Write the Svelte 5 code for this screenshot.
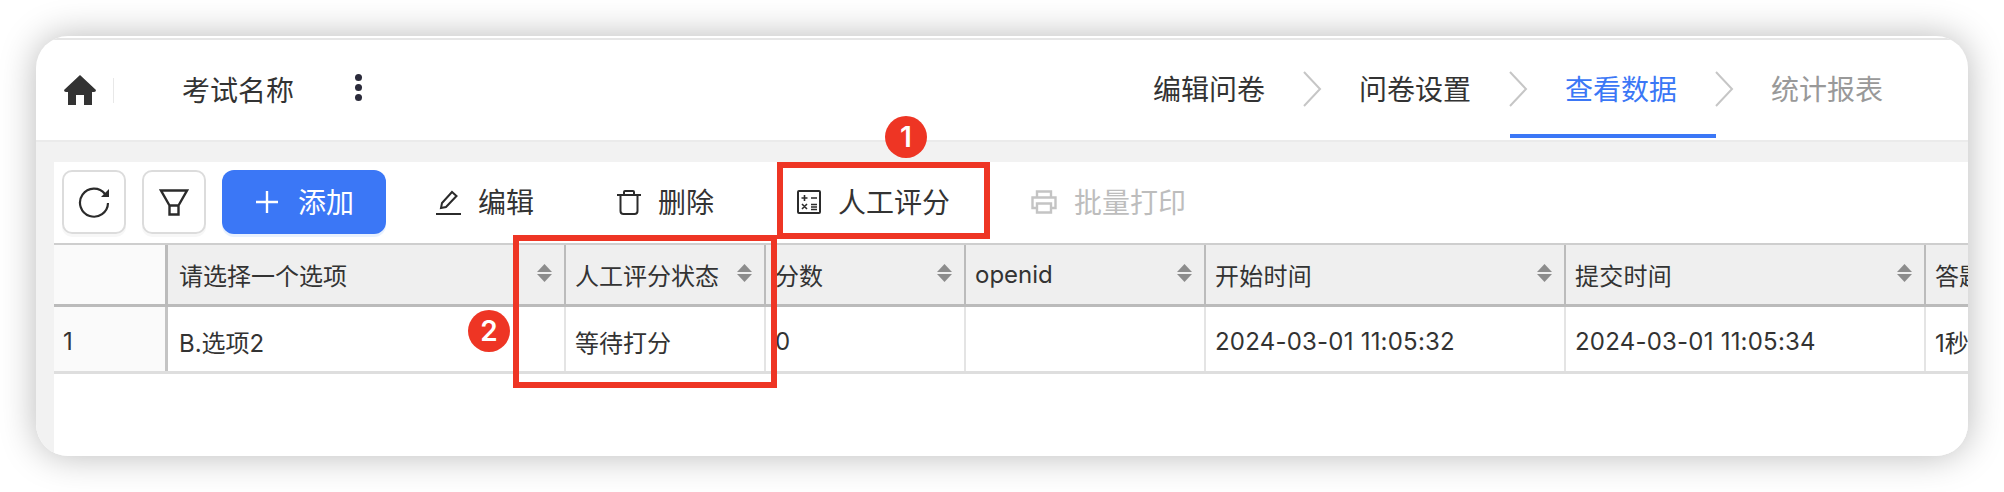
<script>
    const steps = [
        { label: "编辑问卷", state: "" },
        { label: "问卷设置", state: "" },
        { label: "查看数据", state: "active" },
        { label: "统计报表", state: "todo" }
    ];

    //last column runs off the right edge of the window, same as the real table
    const columns = [
        { title: "", width: 114, sort: false, cls: "index" },
        { title: "请选择一个选项", width: 398, sort: true, cls: "option" },
        { title: "人工评分状态", width: 200, sort: true },
        { title: "分数", width: 200, sort: true },
        { title: "openid", width: 240, sort: true },
        { title: "开始时间", width: 360, sort: true, cls: "time" },
        { title: "提交时间", width: 360, sort: true, cls: "time" },
        { title: "答题时长", width: 160, sort: false }
    ];
    const row = ["1", "B.选项2", "等待打分", "0", "", "2024-03-01 11:05:32", "2024-03-01 11:05:34", "1秒"];
    const template = columns.map((c) => c.width + "px").join(" ");
</script>

<div class="page">
    <div class="window">
        <div class="topline"></div>
        <header>
            <div class="left">
                <svg class="home" width="32" height="30" viewBox="0 0 32 30">
                    <path d="M16 0 L32 15 Q32 17 30 17 L28 17 L28 30 L20 30 L20 20 L12 20 L12 30 L4 30 L4 17 L2 17 Q0 17 0 15 Z" fill="#333"/>
                </svg>
                <span class="divider"></span>
                <span class="name">考试名称</span>
                <span class="dots"><i></i><i></i><i></i></span>
            </div>
            <nav>
                {#each steps as step, i}
                    <div class="step {step.state}">
                        {#if i > 0}
                            <svg class="chev" width="20" height="36" viewBox="0 0 20 36">
                                <path d="M2 1 L18 18 L2 35" fill="none" stroke="#c6c6c6" stroke-width="2"/>
                            </svg>
                        {/if}
                        <span>{step.label}</span>
                    </div>
                {/each}
            </nav>
        </header>

        <div class="content">
            <div class="panel">
                <div class="toolbar">
                    <button class="square" aria-label="刷新">
                        <svg width="32" height="32" viewBox="0 0 32 32">
                            <path d="M27 8 A14 14 0 1 0 30 17" fill="none" stroke="#2b2b2b" stroke-width="2.2"/>
                            <path d="M31 3 L31 11 L23 11 Z" fill="#2b2b2b"/>
                        </svg>
                    </button>
                    <button class="square" aria-label="筛选">
                        <svg width="30" height="27" viewBox="0 0 30 27">
                            <path d="M2 1.5 H28 L19.5 16.5 V25.5 H10.5 V16.5 Z M10.5 16.5 H19.5" fill="none" stroke="#2b2b2b" stroke-width="2.4"/>
                        </svg>
                    </button>
                    <button class="add">
                        <svg width="22" height="22" viewBox="0 0 22 22">
                            <path d="M11 0 V22 M0 11 H22" stroke="#fff" stroke-width="2.4"/>
                        </svg>
                        <span>添加</span>
                    </button>
                    <button class="btn">
                        <svg width="25" height="25" viewBox="0 0 25 25">
                            <path d="M5 18 L6 13 L16 2 L20.5 6 L10 17 Z" fill="none" stroke="#2b2b2b" stroke-width="2"/>
                            <path d="M0 24 H25" stroke="#2b2b2b" stroke-width="2"/>
                        </svg>
                        <span>编辑</span>
                    </button>
                    <button class="btn">
                        <svg width="24" height="25" viewBox="0 0 24 25">
                            <path d="M0 5 H24 M7 5 V2 Q7 1 8 1 H16 Q17 1 17 2 V5" fill="none" stroke="#2b2b2b" stroke-width="2"/>
                            <path d="M3.5 5 V21 Q3.5 24 6.5 24 H17.5 Q20.5 24 20.5 21 V5" fill="none" stroke="#2b2b2b" stroke-width="2"/>
                        </svg>
                        <span>删除</span>
                    </button>
                    <button class="btn">
                        <svg width="24" height="24" viewBox="0 0 24 24">
                            <rect x="1" y="1" width="22" height="22" rx="1" fill="none" stroke="#2b2b2b" stroke-width="2"/>
                            <path d="M4.5 8 H10.5 M7.5 5 V11 M14 8 H20 M5 14 L10 19 M10 14 L5 19 M14 14.5 H20 M14 17 H20 M14 19.5 H20" stroke="#2b2b2b" stroke-width="1.6"/>
                        </svg>
                        <span>人工评分</span>
                    </button>
                    <button class="btn print">
                        <svg width="26" height="24" viewBox="0 0 26 24">
                            <path d="M6 7 V1.5 H20 V7" fill="none" stroke="#c4c4c4" stroke-width="2.4"/>
                            <path d="M6 18 H1.5 V7.5 H24.5 V18 H20" fill="none" stroke="#c4c4c4" stroke-width="2.4"/>
                            <path d="M6 13.5 H20 V22.5 H6 Z" fill="none" stroke="#c4c4c4" stroke-width="2.4"/>
                        </svg>
                        <span>批量打印</span>
                    </button>
                </div>

                <div class="table">
                    <div class="row head" style="grid-template-columns:{template}">
                        {#each columns as col}
                            <div class="cell {col.cls ?? ''}">
                                <span>{col.title}</span>
                                {#if col.sort}
                                    <svg class="sort" width="15" height="18" viewBox="0 0 15 18">
                                        <path d="M7.5 0 L15 8 H0 Z M7.5 18 L15 10 H0 Z" fill="#8c8c8c"/>
                                    </svg>
                                {/if}
                            </div>
                        {/each}
                    </div>
                    <div class="row body" style="grid-template-columns:{template}">
                        {#each columns as col, i}
                            <div class="cell {col.cls ?? ''}">{row[i]}</div>
                        {/each}
                    </div>
                </div>
            </div>
        </div>
    </div>

    <!-- annotations drawn on top of the screenshot -->
    <div class="mark one"></div>
    <div class="mark two"></div>
    <div class="badge b1">1</div>
    <div class="badge b2">2</div>
</div>

<style>
    :global(body) {
        margin: 0;
        background: #fff;
    }

    .page {
        position: relative;
        width: 2004px;
        height: 492px;
        padding: 36px;
        box-sizing: border-box;
        overflow: hidden;
        font-family: Inter, "Noto Sans CJK SC", sans-serif;
        color: #333;
    }

    .window {
        width: 1932px;
        height: 420px;
        display: flex;
        flex-direction: column;
        background: #fff;
        border-radius: 32px;
        overflow: hidden;
        box-shadow: 0 0 36px rgba(0, 0, 0, 0.28);
    }

    .topline {
        flex: none;
        height: 2px;
        margin-top: 2px;
        background: #e6e6e6;
    }

    header {
        flex: none;
        height: 100px;
        display: flex;
        justify-content: space-between;
        padding-right: 46px;
        box-sizing: border-box;
    }

    .left {
        display: flex;
        align-items: center;
        padding-left: 28px;
    }

    .home {
        flex: none;
    }

    .divider {
        width: 1px;
        height: 25px;
        margin-left: 17px;
        background: #e8e8e8;
    }

    .name {
        font-size: 28px;
        margin-left: 68px;
        margin-top: -3px;
    }

    .dots {
        display: flex;
        flex-direction: column;
        gap: 3px;
        margin-left: 61px;
        margin-top: -6px;
    }

    .dots i {
        width: 7px;
        height: 7px;
        border-radius: 50%;
        background: #2b2b3b;
    }

    nav {
        display: flex;
    }

    .step {
        width: 206px;
        height: 98px;
        box-sizing: border-box;
        padding-top: 4px;
        display: flex;
        align-items: center;
        border-bottom: 4px solid transparent;
        font-size: 28px;
        color: #333;
    }

    .step span {
        white-space: nowrap;
        margin-left: 55px;
        margin-top: -3px;
    }

    .chev {
        flex: none;
        margin-left: -2px;
        margin-right: -54px;
    }

    .step .chev + span {
        margin-left: 91px;
    }

    .step.active {
        color: #3b77f6;
        border-bottom-color: #3b77f6;
    }

    .step.todo {
        color: #999;
    }

    .content {
        flex: 1;
        min-height: 0;
        padding: 20px 0 0 18px;
        background: #f2f2f2;
        border-top: 2px solid #ebebeb;
    }

    .panel {
        height: 100%;
        background: #fff;
    }

    .toolbar {
        height: 81px;
        box-sizing: border-box;
        display: flex;
        align-items: flex-start;
        padding: 8px 0 0 8px;
    }

    button {
        border: 0;
        background: none;
        padding: 0;
        font: inherit;
        color: inherit;
        display: flex;
        align-items: center;
        justify-content: center;
    }

    button span {
        margin-top: -2px;
    }

    .square {
        width: 64px;
        height: 64px;
        margin-right: 16px;
        border: 2px solid #dcdcdc;
        border-radius: 10px;
        box-sizing: border-box;
        box-shadow: 0 3px 0 #f7f7f7;
    }

    .add {
        width: 164px;
        height: 64px;
        gap: 20px;
        margin-right: 9px;
        padding-left: 2px;
        box-sizing: border-box;
        border-radius: 12px;
        background: #3b77f6;
        color: #fff;
        font-size: 28px;
        box-shadow: 0 3px 0 #e8f1fe;
    }

    .btn {
        height: 64px;
        padding: 0 41px;
        gap: 17px;
        font-size: 28px;
    }

    .btn + .btn {
        padding-left: 42px;
    }

    .btn.print {
        padding-left: 40px;
        color: #bdbdbd;
    }

    .table {
        overflow: hidden;
    }

    .row {
        display: grid;
        width: max-content;
    }

    .cell {
        display: flex;
        align-items: center;
        justify-content: space-between;
        box-sizing: border-box;
        padding: 0 12px 0 9px;
        white-space: nowrap;
        font-size: 24px;
    }

    .cell.option {
        padding-left: 11px;
    }

    .cell.time {
        letter-spacing: 0.22px;
    }

    .head {
        height: 64px;
        border-top: 2px solid #cecece;
        border-bottom: 3px solid #bbb;
        box-sizing: border-box;
    }

    .head .cell {
        background: #efefef;
        border-right: 2px solid #bbb;
    }

    .head .cell.index {
        background: #fafafa;
        border-right-width: 3px;
    }

    .body {
        height: 67px;
        border-bottom: 3px solid #dedede;
        box-sizing: border-box;
    }

    .body .cell {
        padding-top: 5px;
        border-right: 2px solid #e4e4e4;
    }

    .body .cell.index {
        background: #fafafa;
        border-right: 3px solid #c4c4c4;
    }

    .sort {
        flex: none;
        margin-bottom: 3px;
    }

    .mark {
        position: absolute;
        box-sizing: border-box;
        border: 6px solid #ee3524;
    }

    .mark.one {
        left: 777px;
        top: 162px;
        width: 213px;
        height: 77px;
    }

    .mark.two {
        left: 513px;
        top: 235px;
        width: 264px;
        height: 153px;
    }

    .badge {
        position: absolute;
        width: 42px;
        height: 42px;
        border-radius: 50%;
        display: flex;
        align-items: center;
        justify-content: center;
        background: #ee3524;
        color: #fff;
        font-size: 28px;
        font-weight: 600;
    }

    .b1 {
        left: 885px;
        top: 116px;
    }

    .b2 {
        left: 468px;
        top: 310px;
    }
</style>
